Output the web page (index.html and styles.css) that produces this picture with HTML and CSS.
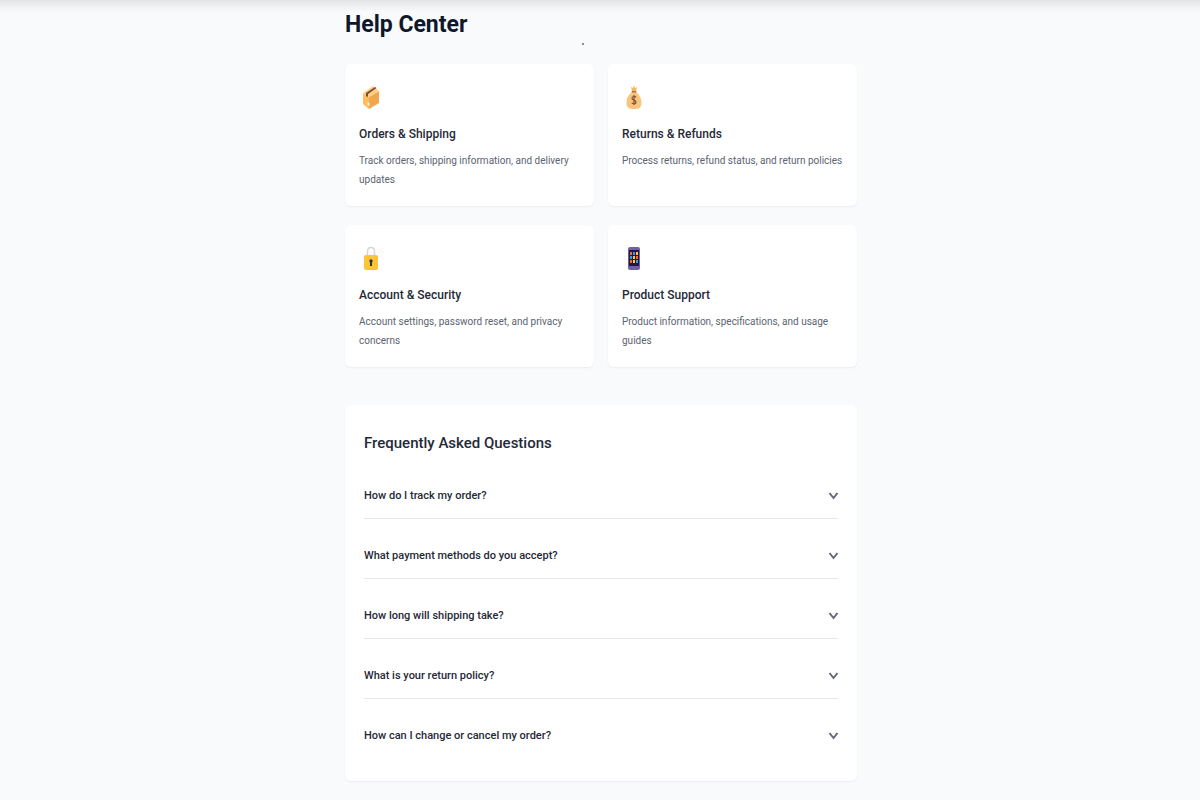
FILE: index.html
```html
<!DOCTYPE html>
<html lang="en">
<head>
<meta charset="utf-8">
<meta name="viewport" content="width=device-width, initial-scale=1">
<title>Help Center</title>
<link rel="stylesheet" href="styles.css">
</head>
<body>
<div class="top-shadow"></div>
<main class="page">
  <header class="page-header">
    <h1 class="page-title">Help Center</h1>
    <span class="dot"></span>
  </header>
  <section class="cards">
    <article class="card">
      <svg class="card-icon" viewBox="0 0 24 26" aria-hidden="true">
        <path fill="#ffbd5c" d="M4 9v11l6 5V13z"/>
        <path fill="#f2a74f" d="M10 13v12l10-6V7z"/>
        <path fill="#ffd083" d="M4 9l10-7 6 5-10 6z"/>
        <path fill="#7d4a3a" d="M7 9l9-6 1.500 1L9 10v3l-2-1z"/>
        <path fill="#fff0d5" d="M8.500 18l2 1v3l-2-1z"/>
      </svg>
      <h2 class="card-title">Orders &amp; Shipping</h2>
      <p class="card-text">Track orders, shipping information, and delivery updates</p>
    </article>
    <article class="card">
      <svg class="card-icon" viewBox="0 0 24 26" aria-hidden="true">
        <path fill="#f6b865" d="M9 3l2 1 1-3 1 3 2-1-1 4h-4z"/>
        <path fill="#fac57b" d="M10 8h4c4 3 5.500 7 5.500 11 0 5-3 6-7.500 6s-7.500-1-7.500-6c0-4 1.500-8 5.500-11z"/>
        <rect fill="#b0703f" x="9.500" y="7" width="5" height="1.500" rx="0.750"/>
        <path fill="none" stroke="#80503c" stroke-width="1.200" d="M14 13.500c-1-1.500-4-1.500-4 .8s4 1.400 4 3.700-3.200 2.300-4.200.7M12 11v10"/>
      </svg>
      <h2 class="card-title">Returns &amp; Refunds</h2>
      <p class="card-text">Process returns, refund status, and return policies</p>
    </article>
    <article class="card">
      <svg class="card-icon" viewBox="0 0 24 26" aria-hidden="true">
        <path fill="none" stroke="#d5d5dc" stroke-width="1.500" d="M8.500 12V7c0-6 7-6 7 0v5"/>
        <rect fill="#fcc436" x="5" y="10" width="14" height="15" rx="2"/>
        <circle fill="#34304f" cx="12" cy="16" r="1.700"/>
        <path fill="#34304f" d="M11 16h2v5h-2z"/>
      </svg>
      <h2 class="card-title">Account &amp; Security</h2>
      <p class="card-text">Account settings, password reset, and privacy concerns</p>
    </article>
    <article class="card">
      <svg class="card-icon" viewBox="0 0 24 26" aria-hidden="true">
        <rect fill="#7160a7" x="6" y="2" width="12" height="23" rx="2"/>
        <path fill="#24163c" d="M7 5h10v16H7z"/>
        <path fill="#2e9df0" d="M11 7h2v3h-2zM8 11h2v3H8zM14 15h2v3h-2z"/>
        <path fill="#ffc83d" d="M14 7h2v3h-2zM11 11h2v3h-2zM11 15h2v3h-2z"/>
        <path fill="#f8652f" d="M8 7h2v3H8zM14 11h2v3h-2zM8 15h2v3H8z"/>
      </svg>
      <h2 class="card-title">Product Support</h2>
      <p class="card-text">Product information, specifications, and usage guides</p>
    </article>
  </section>
  <section class="faq">
    <h2 class="faq-title">Frequently Asked Questions</h2>
    <div class="faq-list">
      <button class="faq-item" type="button"><span>How do I track my order?</span><svg class="chevron" viewBox="0 0 10 8" aria-hidden="true"><path d="M1.500 1L5.500 6l4-5"/></svg></button>
      <button class="faq-item" type="button"><span>What payment methods do you accept?</span><svg class="chevron" viewBox="0 0 10 8" aria-hidden="true"><path d="M1.500 1L5.500 6l4-5"/></svg></button>
      <button class="faq-item" type="button"><span>How long will shipping take?</span><svg class="chevron" viewBox="0 0 10 8" aria-hidden="true"><path d="M1.500 1L5.500 6l4-5"/></svg></button>
      <button class="faq-item" type="button"><span>What is your return policy?</span><svg class="chevron" viewBox="0 0 10 8" aria-hidden="true"><path d="M1.500 1L5.500 6l4-5"/></svg></button>
      <button class="faq-item" type="button"><span>How can I change or cancel my order?</span><svg class="chevron" viewBox="0 0 10 8" aria-hidden="true"><path d="M1.500 1L5.500 6l4-5"/></svg></button>
    </div>
  </section>
</main>
</body>
</html>
```
FILE: styles.css
```css
* {
  box-sizing: border-box;
}

body {
  margin: 0;
  background: #f9fafc;
  color: #1f2937;
  font-family: Roboto, "Noto Sans", sans-serif;
}

h1, h2, p {
  margin: 0;
}

.top-shadow {
  position: absolute;
  top: 0;
  left: 0;
  right: 0;
  height: 12px;
  background: linear-gradient(#e3e4e6, #f9fafc);
}

.page {
  position: relative;
  max-width: 514px;
  margin: 0 auto;
  padding: 6px 0 19px 2px;
}

.page-header {
  position: relative;
  margin-bottom: 20px;
}

.page-title {
  color: #0f172a;
  font-size: 23px;
  line-height: 38px;
  font-weight: 700;
}

.dot {
  position: absolute;
  left: 237px;
  bottom: -1px;
  width: 2px;
  height: 2px;
  background: #8b8d92;
}

.cards {
  display: grid;
  grid-template-columns: 1fr 1fr;
  gap: 19px 14px;
  margin-bottom: 38px;
}

.card {
  padding: 20px 14px 17px;
  border-radius: 6px;
  background: #fff;
  box-shadow: 0 1px 2px rgba(15, 23, 42, 0.06);
}

.card-icon {
  display: block;
  width: 24px;
  height: 26px;
  margin-bottom: 12px;
}

.card-title {
  margin-bottom: 5px;
  font-size: 12px;
  line-height: 24px;
  font-weight: 500;
}

.card-text {
  color: #5b6470;
  font-size: 10px;
  line-height: 19px;
}

.faq {
  padding: 24px 19px 22px;
  border-radius: 6px;
  background: #fff;
  box-shadow: 0 1px 2px rgba(15, 23, 42, 0.06);
}

.faq-title {
  margin-bottom: 16px;
  font-size: 15px;
  line-height: 28px;
  font-weight: 500;
}

.faq-list {
  display: grid;
  gap: 14px;
}

.faq-item {
  display: flex;
  align-items: center;
  justify-content: space-between;
  width: 100%;
  height: 46px;
  padding: 0;
  border: 0;
  border-bottom: 1px solid #e5e7eb;
  background: none;
  color: #1f2937;
  font: inherit;
  font-size: 11px;
  font-weight: 500;
  text-align: left;
}

.faq-item:last-child {
  border-bottom-color: transparent;
}

.chevron {
  width: 10px;
  height: 8px;
  fill: none;
  stroke: #626a78;
  stroke-width: 2;
  overflow: visible;
}
```
